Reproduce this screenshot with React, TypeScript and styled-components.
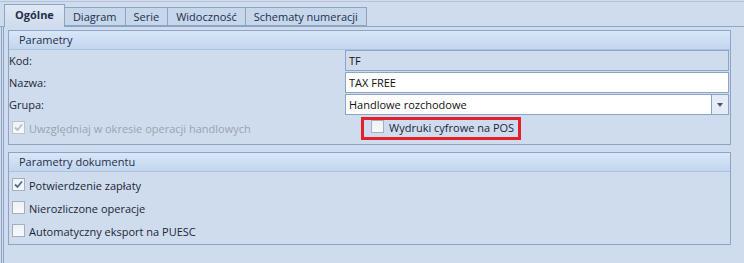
import React from 'react';
import styled, { createGlobalStyle } from 'styled-components';

const GlobalStyle = createGlobalStyle`
    body {
        margin: 0;
        background: #cfdced;
        font-family: "Open Sans", "Noto Sans", sans-serif;
        font-size: 11px;
        color: #1c2638;
    }
`;

const Window = styled.div`
    height: 263px;
    overflow: hidden;
    padding-top: 1px;
    box-sizing: border-box;
`;

const TabStrip = styled.div`
    display: flex;
    align-items: flex-end;
    height: 24px;
    padding-left: 4px;
    border-top: 1px solid #b3c3d9;
    border-bottom: 1px solid #8ea4c4;
`;

const Tab = styled.div<{ active?: boolean }>`
    display: flex;
    align-items: center;
    justify-content: center;
    box-sizing: border-box;
    height: ${p => (p.active ? '23px' : '19px')};
    margin-bottom: ${p => (p.active ? '-1px' : '0')};
    padding: 0 8px;
    border: 1px solid #8ea4c4;
    border-bottom: ${p => (p.active ? 'none' : '1px solid #8ea4c4')};
    margin-left: -1px;
    background: ${p => (p.active ? 'linear-gradient(#dfe9f6, #cfdced)' : '#c6d6eb')};
    font-weight: ${p => (p.active ? 700 : 400)};
    color: #1f2f4a;
    padding-bottom: ${p => (p.active ? '3px' : '0')};
    &:first-child {
        margin-left: 0;
        padding: 0 10px 3px;
    }
`;

const TabPage = styled.div`
    margin-left: 1px;
    border-left: 3px double #8ea4c4;
    padding: 3px 13px 0 4px;
    height: 100%;
`;

const GroupBox = styled.div`
    width: 723px;
    box-sizing: border-box;
    border: 1px solid #8ea4c4;
    margin-bottom: 7px;
`;

const GroupHeader = styled.div`
    height: 18px;
    line-height: 18px;
    padding-left: 10px;
    background: linear-gradient(#d8e7f8, #c2d6ee);
    border-bottom: 1px solid #a8c2e2;
    color: #1f2f4a;
`;

const FieldGrid = styled.div`
    display: grid;
    grid-template-columns: 336px 1fr;
    row-gap: 1px;
    padding-right: 1px;
`;

const Label = styled.div`
    height: 21px;
    line-height: 21px;
`;

const Field = styled.div<{ readOnly?: boolean }>`
    height: 21px;
    box-sizing: border-box;
    border: 1px solid #8ea4c4;
    background: ${p => (p.readOnly ? '#cfdced' : '#ffffff')};
    padding-left: 3px;
    line-height: 19px;
    color: #111;
`;

const Combo = styled(Field)`
    display: flex;
    padding-left: 0;
`;

const ComboText = styled.div`
    flex: 1;
    padding-left: 3px;
`;

const ComboButton = styled.div`
    width: 16px;
    border-left: 1px solid #8ea4c4;
    background: #e4ecf6;
    display: flex;
    align-items: center;
    justify-content: center;
`;

const Arrow = styled.div`
    width: 0;
    height: 0;
    border-left: 3px solid transparent;
    border-right: 3px solid transparent;
    border-top: 4px solid #4b5565;
`;

const CheckRow = styled.div`
    display: grid;
    grid-template-columns: 336px 1fr;
    padding: 2px 0 4px;
    height: 23px;
`;

const CheckItem = styled.div<{ disabled?: boolean }>`
    display: flex;
    align-items: center;
    gap: 4px;
    padding-left: 3px;
    height: 23px;
    color: ${p => (p.disabled ? '#9aa3b1' : '#1c2638')};
`;

const Highlight = styled.div`
    justify-self: start;
    margin-left: 16px;
    box-sizing: border-box;
    height: 23px;
    border: 3px solid #e3202b;
    padding: 0 4px 2px 7px;
    display: flex;
    align-items: center;
    gap: 5px;
    color: #1c2638;
`;

const Box = styled.span<{ faded?: boolean }>`
    width: 11px;
    height: 11px;
    flex: none;
    border: 1px solid ${p => (p.faded ? '#b9c4d3' : '#a3afc0')};
    background: linear-gradient(#eef1f5, #f8f9fb);
    display: flex;
    align-items: center;
    justify-content: center;
    margin-top: -2px;
`;

const CheckList = styled.div`
    padding: 2px 0 1px;
`;

const Tick = ({ color }: { color: string }) => (
    <svg width="9" height="9" viewBox="0 0 9 9">
        <path d="M1 4.5 L3.5 7 L8 1.5" fill="none" stroke={color} strokeWidth="1.8" />
    </svg>
);

const Check = (props: { label: string; checked?: boolean; disabled?: boolean }) => (
    <CheckItem disabled={props.disabled}>
        <Box faded={props.disabled}>
            {props.checked && <Tick color={props.disabled ? '#b3bccb' : '#4d6a9a'} />}
        </Box>
        {props.label}
    </CheckItem>
);

const tabs = ['Ogólne', 'Diagram', 'Serie', 'Widoczność', 'Schematy numeracji'];

const App = () => (
    <Window>
        <GlobalStyle />
        <TabStrip>
            {tabs.map((t, i) => (
                <Tab key={t} active={i === 0}>{t}</Tab>
            ))}
        </TabStrip>
        <TabPage>
            <GroupBox>
                <GroupHeader>Parametry</GroupHeader>
                <FieldGrid>
                    <Label>Kod:</Label>
                    <Field readOnly>TF</Field>
                    <Label>Nazwa:</Label>
                    <Field>TAX FREE</Field>
                    <Label>Grupa:</Label>
                    <Combo>
                        <ComboText>Handlowe rozchodowe</ComboText>
                        <ComboButton><Arrow /></ComboButton>
                    </Combo>
                </FieldGrid>
                <CheckRow>
                    <Check label="Uwzględniaj w okresie operacji handlowych" checked disabled />
                    <Highlight>
                        <Box />
                        Wydruki cyfrowe na POS
                    </Highlight>
                </CheckRow>
            </GroupBox>
            <GroupBox>
                <GroupHeader>Parametry dokumentu</GroupHeader>
                <CheckList>
                    <Check label="Potwierdzenie zapłaty" checked />
                    <Check label="Nierozliczone operacje" />
                    <Check label="Automatyczny eksport na PUESC" />
                </CheckList>
            </GroupBox>
        </TabPage>
    </Window>
);

export default App;
